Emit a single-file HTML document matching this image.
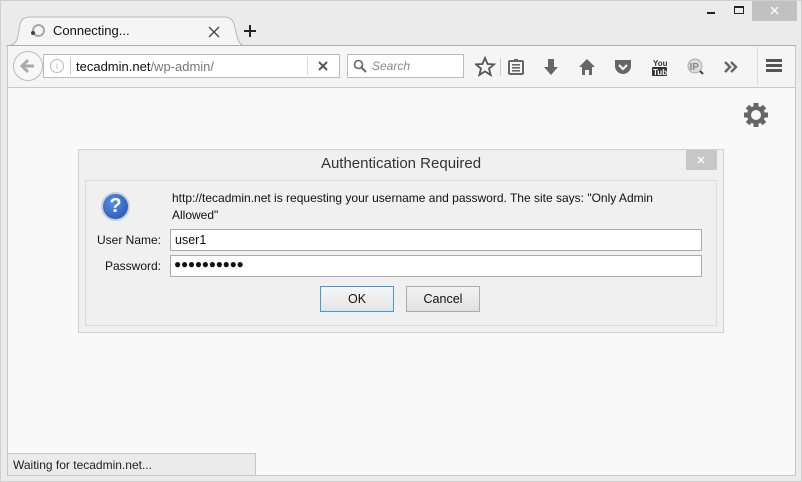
<!DOCTYPE html>
<html><head><style>
*{margin:0;padding:0;box-sizing:border-box}
body{width:802px;height:482px;background:#ebebeb;font-family:"Liberation Sans",sans-serif;position:relative;overflow:hidden;font-size:13px;color:#222}
.a{position:absolute}
</style></head><body>
<div class="a" style="left:0;top:0;width:802px;height:482px;border:1px solid #cfcfcf"></div>
<div class="a" style="left:707px;top:12px;width:8px;height:2px;background:#222"></div>
<div class="a" style="left:734px;top:6px;width:10px;height:8px;border:1px solid #222;border-top-width:2px"></div>
<div class="a" style="left:752px;top:1px;width:45px;height:20px;background:#c1c1c1"></div>
<svg class="a" style="left:752px;top:1px" width="45" height="20"><path d="M19 6 l7 7 M26 6 l-7 7" stroke="#fff" stroke-width="1.4"/></svg>
<svg class="a" style="left:6px;top:16px" width="240" height="32"><path d="M0 30 Q10 30 12 20 L14 8 Q16 1 24 1 L218 1 Q226 1 228 8 L231 20 Q233 30 240 30" fill="#f5f5f6" stroke="#b8b8b8"/></svg>
<div class="a" style="left:32px;top:24px;width:13px;height:13px;border-radius:50%;border:2px solid #aaa"></div>
<div class="a" style="left:31px;top:31px;width:4px;height:4px;border-radius:50%;background:#444"></div>
<div class="a" style="left:53px;top:23px;font-size:13px;color:#111">Connecting...</div>
<svg class="a" style="left:208px;top:26px" width="12" height="12"><path d="M1 1 L11 11 M11 1 L1 11" stroke="#444" stroke-width="1.3"/></svg>
<svg class="a" style="left:243px;top:24px" width="14" height="14"><path d="M7 1 V13 M1 7 H13" stroke="#222" stroke-width="2"/></svg>
<div class="a" style="left:7px;top:45px;width:789px;height:43px;background:#f5f5f6;border-top:1px solid #a9aeb3;border-bottom:1px solid #c8c8c8;border-left:1px solid #c8c8c8;border-right:1px solid #c8c8c8"></div>
<div class="a" style="left:43px;top:54px;width:297px;height:24px;background:#fff;border:1px solid #bbb"></div>
<div class="a" style="left:13px;top:51px;width:30px;height:30px;border-radius:50%;background:#f7f7f7;border:1px solid #bbb"></div>
<svg class="a" style="left:19px;top:57px" width="18" height="18"><path d="M9 3 L3 9 L9 15 M3 9 H15" stroke="#aaa" stroke-width="3" fill="none"/></svg>
<div class="a" style="left:50px;top:59px;width:14px;height:14px;border-radius:50%;border:1px solid #bbb;font-size:9px;color:#bbb;text-align:center;line-height:12px">i</div>
<div class="a" style="left:70px;top:57px;width:1px;height:18px;background:#ccc"></div>
<div class="a" style="left:76px;top:59px;font-size:13px;color:#111">tecadmin.net<span style="color:#777">/wp-admin/</span></div>
<div class="a" style="left:307px;top:57px;width:1px;height:18px;background:#ddd"></div>
<svg class="a" style="left:318px;top:61px" width="10" height="10"><path d="M1 1 L9 9 M9 1 L1 9" stroke="#555" stroke-width="2"/></svg>
<div class="a" style="left:347px;top:54px;width:117px;height:24px;background:#fff;border:1px solid #bbb"></div>
<svg class="a" style="left:353px;top:59px" width="14" height="14"><circle cx="5.5" cy="5.5" r="4" fill="none" stroke="#666" stroke-width="1.6"/><path d="M8.5 8.5 L13 13" stroke="#666" stroke-width="2"/></svg>
<div class="a" style="left:372px;top:59px;font-size:12px;color:#888;font-style:italic">Search</div>
<svg class="a" style="left:475px;top:56px" width="280" height="22" fill="#666">
<path d="M10 2 L12.6 8 L19 8.4 L14 12.6 L15.7 19 L10 15.4 L4.3 19 L6 12.6 L1 8.4 L7.4 8 Z" fill="none" stroke="#555" stroke-width="1.8"/>
<rect x="25" y="2" width="1" height="18" fill="#ccc"/>
<rect x="34" y="5" width="14" height="13" rx="1" fill="none" stroke="#666" stroke-width="2"/><rect x="37" y="8" width="8" height="1.6"/><rect x="37" y="11" width="8" height="1.6"/><rect x="37" y="14" width="8" height="1.6"/><rect x="39" y="3" width="4" height="3"/>
<path d="M73 3 h6 v8 h4 l-7 8 l-7 -8 h4 z"/>
<path d="M104 11 l8 -8 l8 8 h-3 v8 h-3 v-5 h-4 v5 h-3 v-8 z"/>
<path d="M140 4 h16 v6 a8 8 0 0 1 -16 0 z"/><path d="M144 9 l4 4 l4 -4" stroke="#f5f5f6" stroke-width="2.2" fill="none"/>
<text x="178" y="10" font-size="8" font-family="Liberation Sans" font-weight="bold" fill="#333">You</text><rect x="177" y="11" width="15" height="9" rx="1" fill="#333"/><text x="178" y="19" font-size="8" font-family="Liberation Sans" font-weight="bold" fill="#fff">Tube</text>
<circle cx="220" cy="10" r="7" fill="#ddd" stroke="#aaa"/><text x="214.5" y="14" font-size="10" font-weight="bold" font-family="Liberation Sans" fill="#888">IP</text><path d="M225 15 l3 3" stroke="#444" stroke-width="2"/>
<path d="M250 6 l5 5 l-5 5 M256 6 l5 5 l-5 5" stroke="#666" stroke-width="2.5" fill="none"/>
</svg>
<div class="a" style="left:757px;top:47px;width:1px;height:38px;background:#ddd"></div>
<div class="a" style="left:766px;top:59px;width:16px;height:3px;background:#555;box-shadow:0 5px 0 #555,0 10px 0 #555"></div>
<div class="a" style="left:7px;top:88px;width:789px;height:388px;background:#f9f9f9;border:1px solid #c8c8c8;border-top:none"></div>
<svg class="a" style="left:743px;top:102px" width="26" height="26"><g fill="#666" transform="translate(13,13)"><circle r="9"/><rect x="-2.5" y="-12" width="5" height="24"/><rect x="-2.5" y="-12" width="5" height="24" transform="rotate(45)"/><rect x="-2.5" y="-12" width="5" height="24" transform="rotate(90)"/><rect x="-2.5" y="-12" width="5" height="24" transform="rotate(135)"/></g><circle cx="13" cy="13" r="5" fill="#f9f9f9"/></svg>
<div class="a" style="left:78px;top:149px;width:646px;height:184px;background:#f0f0f0;border:1px solid #d0d0d0"></div>
<div class="a" style="left:78px;top:155px;width:646px;text-align:center;font-size:15px;color:#333">Authentication Required</div>
<div class="a" style="left:686px;top:150px;width:31px;height:20px;background:#c7c7c7"></div>
<svg class="a" style="left:686px;top:150px" width="31" height="20"><path d="M12 7 l6 6 M18 7 l-6 6" stroke="#fff" stroke-width="1.4"/></svg>
<div class="a" style="left:85px;top:180px;width:632px;height:146px;border:1px solid #dcdcdc"></div>
<div class="a" style="left:101px;top:192px;width:29px;height:29px;border-radius:50%;background:radial-gradient(circle at 40% 35%,#5a8ee0,#1f4fae);border:2px solid #c9cfd8;color:#fff;font-weight:bold;font-size:20px;text-align:center;line-height:25px">?</div>
<div class="a" style="left:172px;top:190px;font-size:12px;line-height:17px;width:520px;color:#111">http://tecadmin.net is requesting your username and password. The site says: "Only Admin<br>Allowed"</div>
<div class="a" style="left:86px;top:233px;width:75px;text-align:right;font-size:12px;color:#111">User Name:</div>
<div class="a" style="left:86px;top:259px;width:75px;text-align:right;font-size:12px;color:#111">Password:</div>
<div class="a" style="left:170px;top:229px;width:532px;height:22px;background:#fff;border:1px solid #ababab;padding:3px 4px;font-size:12.5px;color:#111">user1</div>
<div class="a" style="left:170px;top:255px;width:532px;height:22px;background:#fff;border:1px solid #ababab;padding:1px 3px;font-size:12px;color:#111;letter-spacing:-0.3px">●●●●●●●●●●</div>
<div class="a" style="left:320px;top:286px;width:74px;height:26px;background:linear-gradient(#f6f6f6,#e4e4e4);border:1px solid #3c9ae8;text-align:center;line-height:24px;font-size:12.5px;color:#111">OK</div>
<div class="a" style="left:406px;top:286px;width:74px;height:26px;background:linear-gradient(#f2f2f2,#e2e2e2);border:1px solid #acacac;text-align:center;line-height:24px;font-size:12.5px;color:#111">Cancel</div>
<div class="a" style="left:7px;top:453px;width:249px;height:23px;background:#ebebeb;border:1px solid #c6c6c6;padding:4px 5px;font-size:12px;color:#222">Waiting for tecadmin.net...</div>
</body></html>
